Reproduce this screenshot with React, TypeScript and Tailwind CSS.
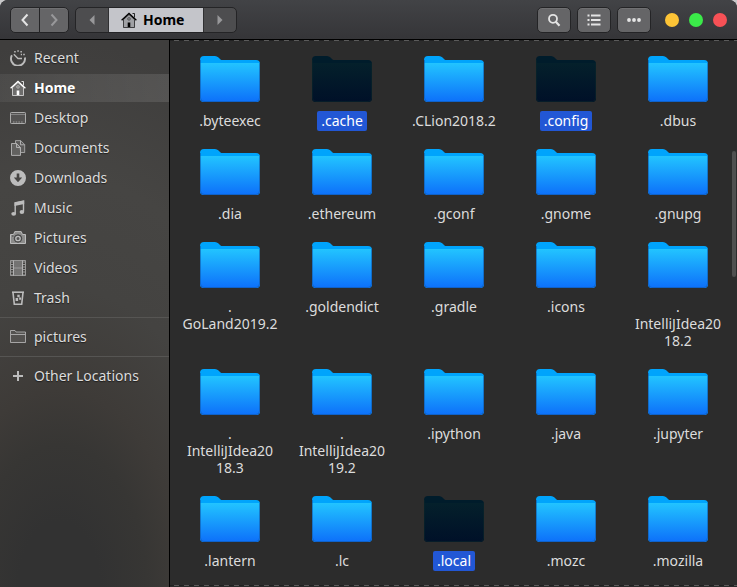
import type { ReactNode } from "react";
import clsx from "clsx";

const folders = [
  { name: ".byteexec" },
  { name: ".cache", selected: true },
  { name: ".CLion2018.2" },
  { name: ".config", selected: true },
  { name: ".dbus" },
  { name: ".dia" },
  { name: ".ethereum" },
  { name: ".gconf" },
  { name: ".gnome" },
  { name: ".gnupg" },
  { name: ".\nGoLand2019.2" },
  { name: ".goldendict" },
  { name: ".gradle" },
  { name: ".icons" },
  { name: ".\nIntelliJIdea20\n18.2" },
  { name: ".\nIntelliJIdea20\n18.3" },
  { name: ".\nIntelliJIdea20\n19.2" },
  { name: ".ipython" },
  { name: ".java" },
  { name: ".jupyter" },
  { name: ".lantern" },
  { name: ".lc" },
  { name: ".local", selected: true },
  { name: ".mozc" },
  { name: ".mozilla" },
];

const Icon = ({ children }: { children: ReactNode }) => (
  <svg viewBox="0 0 16 16" className="size-4 shrink-0" fill="none" stroke="currentColor" aria-hidden="true">
    {children}
  </svg>
);

const HomeIcon = () => (
  <Icon>
    <path d="M2.5 7.5v8h11v-8L8 2.5z" fill="currentColor" fillOpacity=".18" strokeOpacity=".65" />
    <path d="M.6 8.2 8 1.5l7.4 6.7" strokeWidth="1.3" />
    <path d="M11.5 1.5h2v4" strokeOpacity=".8" />
    <path d="M6.7 10.5h2.6V15H6.7z" fill="currentColor" stroke="none" />
    <rect x="6.8" y="5.8" width="2.4" height="2.2" rx=".6" strokeWidth=".8" strokeOpacity=".6" />
  </Icon>
);

const RecentIcon = () => (
  <Icon>
    <path d="M1.9 5.3A7 7 0 1 0 14.9 7.5" strokeWidth="1.9" />
    <path d="m3.8 4.2 4.200 4.300h4" strokeWidth="1.3" />
    <path d="M4.2 1.8h1.500M7.3.9h1.500M10.400 1.800h1.500M10.800 4.500h1.200M13.200 4.500h1.600" strokeWidth="1.5" />
  </Icon>
);

const DesktopIcon = () => (
  <Icon>
    <rect x=".5" y="2.5" width="15" height="11" rx=".8" fill="currentColor" fillOpacity=".14" strokeOpacity=".85" />
    <path d="M1 4.5h14" strokeOpacity=".45" />
    <path d="M3 12h1.5M5.7 12h1.5M8.4 12h1.5M11.1 12h1.5" strokeOpacity=".7" />
  </Icon>
);

const DocumentsIcon = () => (
  <Icon>
    <path d="M5.500 3V.6h5.200l4 4v7.900H11" fill="currentColor" fillOpacity=".2" strokeOpacity=".75" />
    <path d="M1.5 3.5h5l4 4v7.9h-9z" fill="currentColor" fillOpacity=".25" strokeOpacity=".85" />
    <path d="M6.5 3.5v4h4M10.5.8v4h4" strokeOpacity=".85" />
  </Icon>
);

const DownloadsIcon = () => (
  <Icon>
    <path
      d="M8 0a8 8 0 1 0 0 16A8 8 0 0 0 8 0zM6.7 3.5h2.6v4h2.9L8 12.2 3.8 7.5h2.9z"
      fill="currentColor"
      fillRule="evenodd"
      stroke="none"
    />
  </Icon>
);

const MusicIcon = () => (
  <Icon>
    <path d="M5.2 13.5V2.8l8.3-1.6v10.3" strokeWidth="1.4" />
    <path d="M4.500 2.4 14.200.5v3.500L4.500 5.9z" fill="currentColor" stroke="none" />
    <ellipse cx="3.7" cy="13.8" rx="2.4" ry="1.9" fill="currentColor" stroke="none" />
    <ellipse cx="11.9" cy="12" rx="2.3" ry="1.9" fill="currentColor" stroke="none" />
  </Icon>
);

const CameraIcon = () => (
  <Icon>
    <path d="M.5 4.5h3l1.3-2.9h6.4l1.3 2.9h3v9H.5z" fill="currentColor" fillOpacity=".6" strokeLinejoin="round" />
    <circle cx="8" cy="8.5" r="3.7" fill="#555" stroke="#444" />
    <circle cx="8" cy="8.5" r="2.2" strokeWidth="1.3" />
    <path d="M2 6h1.5" stroke="#444" />
  </Icon>
);

const VideosIcon = () => (
  <Icon>
    <path d="M.5.5h15v15H.5z" strokeOpacity=".7" />
    <path d="M4 1h8v6.5H4zM4 8.5h8V15H4z" fill="currentColor" fillOpacity=".4" stroke="none" />
    <path d="M3.5.5v15M12.5.5v15M3.5 8h9" strokeOpacity=".9" />
    <path d="M2 1.5v13M14 1.5v13" strokeWidth="1.4" strokeDasharray="1 1.5" />
  </Icon>
);

const TrashIcon = () => (
  <Icon>
    <path d="M2 2.2h12" strokeWidth="1.6" />
    <path d="m3 2.5 1.3 11.8h7.4L13 2.5" strokeWidth="1.6" />
    <path d="M7.300 4.800h2.400v2.400H7.300zM9.100 7.500h2v2.200h-2zM5.600 8h2.500v3H5.600z" fill="currentColor" stroke="none" />
  </Icon>
);

const SmallFolderIcon = () => (
  <Icon>
    <path d="M.5 13.5v-12h4.500l1 1.500h9.500v10.500z" fill="currentColor" fillOpacity=".15" strokeOpacity=".8" />
    <path d="M1 5.5h14" strokeOpacity=".8" />
  </Icon>
);

const PlusIcon = () => (
  <Icon>
    <path d="M8 3v10M3 8h10" strokeWidth="2" />
  </Icon>
);

const places = [
  { name: "Recent", icon: <RecentIcon /> },
  { name: "Home", icon: <HomeIcon />, active: true },
  { name: "Desktop", icon: <DesktopIcon /> },
  { name: "Documents", icon: <DocumentsIcon /> },
  { name: "Downloads", icon: <DownloadsIcon /> },
  { name: "Music", icon: <MusicIcon /> },
  { name: "Pictures", icon: <CameraIcon /> },
  { name: "Videos", icon: <VideosIcon /> },
  { name: "Trash", icon: <TrashIcon /> },
];

type PlaceProps = { name: string; icon: ReactNode; active?: boolean };

const Place = ({ name, icon, active }: PlaceProps) => (
  <a
    href="#"
    className={clsx(
      "flex h-7 items-center gap-2 pl-2.5 [text-shadow:0_1px_1px_#0008]",
      active ? "bg-linear-to-r from-white/6 to-white/11 font-bold text-white" : "text-[#dcdcdc]"
    )}
  >
    <span className={clsx("flex", active ? "text-white" : "text-[#bcbcbc]")}>{icon}</span>
    {name}
  </a>
);

// folder artwork, dark tint when the item is selected
const Folder = ({ selected }: { selected?: boolean }) => (
  <svg viewBox="0 0 60 47" className="h-[47px] w-[60px]" aria-hidden="true">
    <defs>
      <linearGradient id="folder" x1="0" y1="0" x2="0" y2="1">
        <stop offset="0" stopColor="#22c4ff" />
        <stop offset="1" stopColor="#0d70fa" />
      </linearGradient>
      <linearGradient id="folder-dark" x1="0" y1="0" x2="0" y2="1">
        <stop offset="0" stopColor="#04202b" />
        <stop offset="1" stopColor="#001028" />
      </linearGradient>
    </defs>
    <path
      d="M0 4q0-4 4-4h11q2 0 3.500 1.500l2 2q.8.500 2 .5H56q4 0 4 4v34q0 4-4 4H4q-4 0-4-4z"
      fill={selected ? "#001c2b" : "#00a4fc"}
    />
    <path d="M0 7h60v35q0 4-4 4H4q-4 0-4-4z" fill={selected ? "url(#folder-dark)" : "url(#folder)"} />
    <path
      d="M.5 4v38q0 3.500 3.500 3.500h52q3.500 0 3.500-3.500V7"
      fill="none"
      stroke={selected ? "#0a2429" : "#1059a8"}
      strokeOpacity=".6"
    />
  </svg>
);

const toolButton =
  "flex h-[26px] items-center justify-center border border-[#242426] bg-[#656567] text-[#e4e4e4] shadow-[inset_0_1px_0_#707072]";

const Header = () => (
  <header className="flex h-10 shrink-0 items-center border-b border-black bg-linear-to-b from-[#424346] to-[#353538] px-2.5">
    <div className="flex">
      <button aria-label="Back" className={clsx(toolButton, "w-[30px] rounded-l-[5px]")}>
        <Icon>
          <path d="m10.500 2.500-5 5.500 5 5.500" strokeWidth="2" />
        </Icon>
      </button>
      <button aria-label="Forward" className={clsx(toolButton, "-ml-px w-[30px] rounded-r-[5px]")}>
        <span className="text-[#98989a]">
          <Icon>
            <path d="m5.500 2.500 5 5.500-5 5.500" strokeWidth="2" />
          </Icon>
        </span>
      </button>
    </div>
    <nav className="ml-[6px] flex h-[26px] overflow-hidden rounded-[5px] border border-[#242426] bg-[#4d4d4f]">
      <button aria-label="Scroll left" className="flex w-8 items-center justify-center text-[#98989a]">
        <Icon>
          <path d="M10.500 3v10l-5-5z" fill="currentColor" stroke="none" />
        </Icon>
      </button>
      <button className="flex w-24 items-center gap-1.5 border-x border-[#303032] bg-[#c4c5ca] pl-3 font-bold text-black">
        <HomeIcon />
        Home
      </button>
      <button aria-label="Scroll right" className="flex w-8 items-center justify-center text-[#98989a]">
        <Icon>
          <path d="M5.500 3v10l5-5z" fill="currentColor" stroke="none" />
        </Icon>
      </button>
    </nav>
    <div className="ml-auto flex gap-[6px]">
      <button aria-label="Search" className={clsx(toolButton, "w-[34px] rounded-[5px]")}>
        <Icon>
          <circle cx="7" cy="6.800" r="4" strokeWidth="1.800" />
          <path d="m9.800 9.800 3.700 3.900" strokeWidth="2.200" />
        </Icon>
      </button>
      <button aria-label="List view" className={clsx(toolButton, "w-[34px] rounded-[5px]")}>
        <Icon>
          <path d="M5 3.500h9.500M5 8h9.500M5 12.500h9.500" strokeWidth="2" />
          <path d="M1.500 3.500h2M1.500 8h2M1.500 12.500h2" strokeWidth="2" />
        </Icon>
      </button>
      <button aria-label="Menu" className={clsx(toolButton, "w-[34px] rounded-[5px]")}>
        <Icon>
          <path d="M3 8h.01M8 8h.01M13 8h.01" strokeWidth="3.800" strokeLinecap="round" />
        </Icon>
      </button>
    </div>
    <div className="ml-3.5 flex gap-2.5">
      <button aria-label="Minimize" className="size-3.5 rounded-full bg-[#fdc436]" />
      <button aria-label="Maximize" className="size-3.5 rounded-full bg-[#3bea49]" />
      <button aria-label="Close" className="size-3.5 rounded-full bg-[#f75156]" />
    </div>
  </header>
);

const Sidebar = () => (
  <aside className="flex w-[170px] shrink-0 flex-col border-r border-black bg-[radial-gradient(ellipse_200%_100%_at_35%_100%,#323232_12%,#373634_26%,#3e3b38_36%,#444341_55%,#464543_75%,#3f3e3d_100%)] pt-1">
    <nav className="flex flex-col gap-0.5">
      {places.map((place) => (
        <Place key={place.name} {...place} />
      ))}
    </nav>
    <hr className="my-[5px] border-[#565553]" />
    <Place name="pictures" icon={<SmallFolderIcon />} />
    <hr className="my-[5px] border-[#565553]" />
    <Place name="Other Locations" icon={<PlusIcon />} />
  </aside>
);

const Dashes = () => (
  <div className="h-px bg-[repeating-linear-gradient(90deg,#222_0_4px,#5a5a5a_4px_9px,#222_9px_10px)]" />
);

const Files = () => (
  <main className="relative flex flex-1 flex-col bg-[#2c2c2c] pb-px">
    <Dashes />
    <ul className="grid flex-1 grid-cols-[repeat(auto-fill,minmax(112px,1fr))] content-start gap-y-[18px] pt-[15px] pr-[3px] pl-1">
      {folders.map(({ name, selected }) => (
        <li key={name} className="flex flex-col items-center gap-2">
          <Folder selected={selected} />
          <span
            className={clsx(
              "rounded-xs px-1 pt-px pb-0.5 text-center leading-[17px] whitespace-pre-line",
              selected ? "bg-[#2257d5] text-white" : "text-[#dcdcdc]"
            )}
          >
            {name}
          </span>
        </li>
      ))}
    </ul>
    <Dashes />
    <div className="absolute top-[111px] right-px h-[126px] w-1 rounded-full bg-[#505050]" />
  </main>
);

export default function App() {
  return (
    <div className="min-h-screen bg-[#c8c8ca]">
      <div className="flex min-h-screen flex-col overflow-hidden rounded-t-lg bg-[#2c2c2c] font-['Noto_Sans',sans-serif] text-sm">
        <Header />
        <div className="flex flex-1">
          <Sidebar />
          <Files />
        </div>
      </div>
    </div>
  );
}
